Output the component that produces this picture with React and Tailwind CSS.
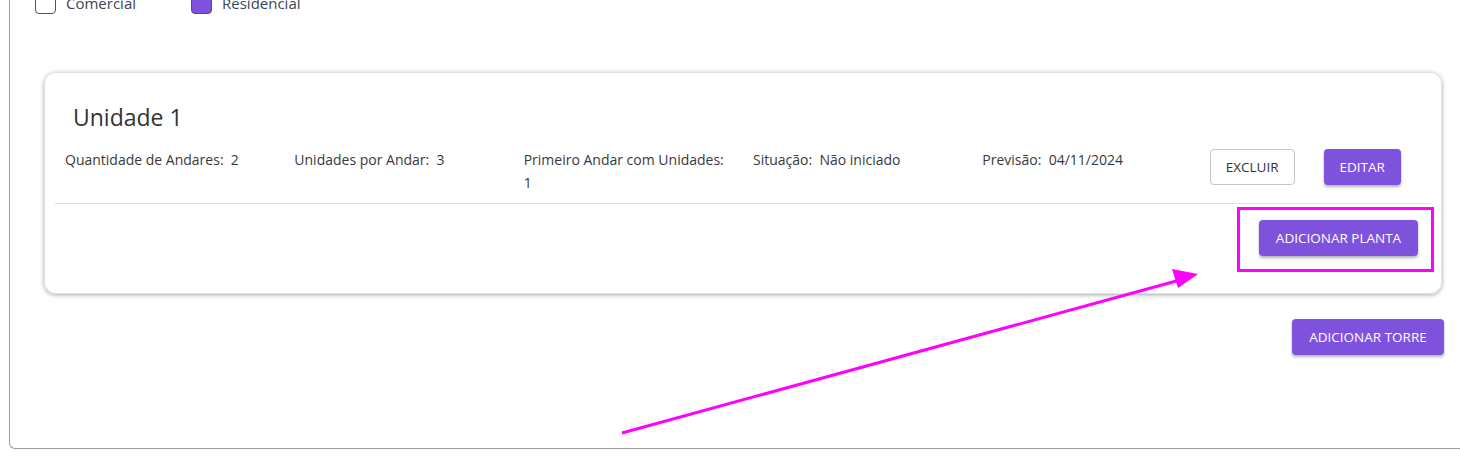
import React from 'react';

const FONT = "font-['Open_Sans','Lato',sans-serif]";

const info = [
  { label: 'Quantidade de Andares:', value: '2' },
  { label: 'Unidades por Andar:', value: '3' },
  { label: 'Primeiro Andar com Unidades:', value: '1' },
  { label: 'Situação:', value: 'Não iniciado' },
  { label: 'Previsão:', value: '04/11/2024' },
];

function Checkbox({ label, checked }) {
  return (
    <label className="flex items-center gap-[10px]">
      <span
        className={`w-[21px] h-[21px] rounded-[4px] border-[1.5px] border-[#555] flex items-center justify-center ${
          checked ? 'bg-[#7f52dd]' : 'bg-white'
        }`}
      >
        {checked && <span className="w-[15px] h-[15px] rounded-[2px] bg-[#7f52dd]" />}
      </span>
      <span className="text-[15px] text-[#3b4656]">{label}</span>
    </label>
  );
}

function PurpleButton({ children, className = '' }) {
  return (
    <button
      className={`h-[36px] rounded-[4px] bg-[#7f52dd] text-white text-[13.5px] font-medium uppercase shadow-[0_2px_3px_rgba(0,0,0,0.3)] ${className}`}
    >
      {children}
    </button>
  );
}

export default function App() {
  return (
    <div className={`relative w-[1460px] h-[468px] overflow-hidden bg-white ${FONT}`}>
      <div className="-mt-[47px] ml-[9px] w-[1470px] h-[496px] border-l border-b border-[#9e9e9e] rounded-bl-[6px] pl-[34px] pr-[35px] flex flex-col">
        {/* checkbox row */}
        <div className="flex items-center gap-[55px] h-[61px] -ml-[9px] pt-[40px]">
          <Checkbox label="Comercial" />
          <Checkbox label="Residencial" checked />
        </div>

        {/* unit card */}
        <div className="mt-[58px] w-[1398px] rounded-[12px] border border-[#e2e2e2] shadow-[0_1px_4px_rgba(0,0,0,0.35)] px-[10px] flex flex-col">
          <h2 className="pt-[28px] pl-[18px] text-[23px] leading-[32px] text-[#333] font-normal">Unidade 1</h2>
          <div className="grid grid-cols-6 mt-[15px] pb-[9px] border-b border-[#e0e0e0]">
            {info.map((item) => (
              <div key={item.label} className="pl-[10px] pr-[12px] text-[14px] leading-[23px] text-[#3a3a3a]">
                {item.label}&nbsp; {item.value}
              </div>
            ))}
            <div className="flex items-start pl-[8px] mt-[1px] gap-[29px]">
              <button className="h-[36px] w-[85px] rounded-[4px] border border-[#c4c4c4] bg-white text-[13.5px] text-[#333] uppercase">
                Excluir
              </button>
              <PurpleButton className="w-[77px]">Editar</PurpleButton>
            </div>
          </div>
          <div className="flex justify-end pt-[16px] pb-[37px] pr-[13px]">
            <PurpleButton className="w-[159px]">Adicionar Planta</PurpleButton>
          </div>
        </div>

        <div className="flex justify-end mt-[25px]">
          <PurpleButton className="w-[152px]">Adicionar Torre</PurpleButton>
        </div>
      </div>

      {/* annotation overlay */}
      <div className="absolute left-[1237px] top-[207px] w-[197px] h-[65px] border-[3px] border-[#ff00ff]" />
      <svg className="absolute left-0 top-0 pointer-events-none" width="1460" height="468">
        <line x1="622" y1="433" x2="1180" y2="280" stroke="#ff00ff" strokeWidth="3" />
        <polygon points="1198,274 1172,269 1178,288" fill="#ff00ff" />
      </svg>
    </div>
  );
}
